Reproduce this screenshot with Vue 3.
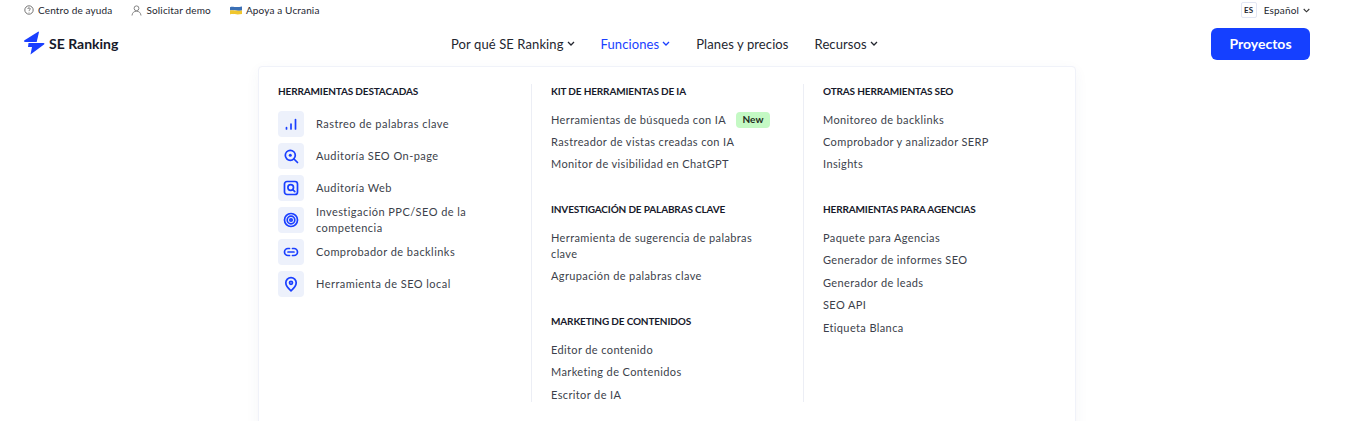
<script setup>
const featured = [
  { name: 'Rastreo de palabras clave', icon: 'bars' },
  { name: 'Auditoría SEO On-page', icon: 'search' },
  { name: 'Auditoría Web', icon: 'web' },
  { name: 'Investigación PPC/SEO de la competencia', icon: 'target' },
  { name: 'Comprobador de backlinks', icon: 'link' },
  { name: 'Herramienta de SEO local', icon: 'pin' },
]

const middle = [
  { title: 'Kit de herramientas de IA', items: ['Herramientas de búsqueda con IA', 'Rastreador de vistas creadas con IA', 'Monitor de visibilidad en ChatGPT'] },
  { title: 'Investigación de palabras clave', items: ['Herramienta de sugerencia de palabras clave', 'Agrupación de palabras clave'] },
  { title: 'Marketing de contenidos', items: ['Editor de contenido', 'Marketing de Contenidos', 'Escritor de IA'] },
]

const right = [
  { title: 'Otras herramientas SEO', items: ['Monitoreo de backlinks', 'Comprobador y analizador SERP', 'Insights'] },
  { title: 'Herramientas para agencias', items: ['Paquete para Agencias', 'Generador de informes SEO', 'Generador de leads', 'SEO API', 'Etiqueta Blanca'] },
]
</script>

<template>
  <div class="page">
    <div class="topbar">
      <a class="top-link">
        <svg width="10" height="10" viewBox="0 0 11 11" fill="none" stroke="#555" stroke-width="0.9">
          <circle cx="5.500" cy="5.500" r="4.600" />
          <path d="M4.200 4.400a1.300 1.300 0 1 1 1.800 1.200c-.4.2-.5.4-.5.8M5.500 7.600v.6" />
        </svg>
        Centro de ayuda
      </a>
      <a class="top-link">
        <svg width="11" height="11" viewBox="0 0 11 11" fill="none" stroke="#777" stroke-width="0.9">
          <circle cx="5.500" cy="3.300" r="2.400" />
          <path d="M1 10.500c.3-2.800 2-4.300 4.500-4.300s4.200 1.500 4.500 4.300" />
        </svg>
        Solicitar demo
      </a>
      <a class="top-link">
        <svg width="12" height="9" viewBox="0 0 12 9">
          <path d="M0 1.200c3-1.200 5 .8 12-.6V4.400c-6 1-9-.6-12 .2z" fill="#3b6fb5" />
          <path d="M0 4.600c3-.8 6 .8 12-.2V8c-6 1.200-9-.6-12 .4z" fill="#f0c62d" />
        </svg>
        Apoya a Ucrania
      </a>
      <div class="lang">
        <span class="lang-code">ES</span>
        <span>Español</span>
        <svg class="chev" width="7" height="5" viewBox="0 0 7 5" fill="none" stroke="#333" stroke-width="1.100">
          <path d="M.7 1l2.800 2.800L6.300 1" />
        </svg>
      </div>
    </div>

    <header class="header">
      <div class="logo">
        <svg width="22" height="24" viewBox="0 0 22 24">
          <path d="M15.500.5 16 1 13.700 11H2.500C1 11 .3 10.200 1.500 9.300z" fill="#1a3fff" />
          <path d="M5.500 12H20.500c1 0 1.300.8.500 1.500L7.500 23.500 9 16H5z" fill="#1a3fff" />
        </svg>
        <span>SE Ranking</span>
      </div>
      <nav class="nav">
        <a class="nav-link">Por qué SE Ranking
          <svg width="8" height="6" viewBox="0 0 8 6" fill="none" stroke="currentColor" stroke-width="1.300"><path d="M1 1l3 3 3-3" /></svg>
        </a>
        <a class="nav-link active">Funciones
          <svg width="8" height="6" viewBox="0 0 8 6" fill="none" stroke="currentColor" stroke-width="1.300"><path d="M1 1l3 3 3-3" /></svg>
        </a>
        <a class="nav-link">Planes y precios</a>
        <a class="nav-link">Recursos
          <svg width="8" height="6" viewBox="0 0 8 6" fill="none" stroke="currentColor" stroke-width="1.300"><path d="M1 1l3 3 3-3" /></svg>
        </a>
      </nav>
      <button class="cta">Proyectos</button>
    </header>

    <div class="panel">
      <section class="col first">
        <h4>Herramientas destacadas</h4>
        <ul class="featured">
          <li v-for="f in featured" :key="f.name">
            <span class="ico">
              <svg width="16" height="16" viewBox="0 0 16 16" fill="none" stroke="#1a3fff" stroke-width="1.700" stroke-linecap="round" stroke-linejoin="round">
                <template v-if="f.icon === 'bars'">
                  <path d="M3.500 13v-1.500M8 13V8M12.500 13V3.500" />
                </template>
                <template v-else-if="f.icon === 'search'">
                  <circle cx="7.300" cy="7.300" r="5" />
                  <circle cx="7.300" cy="7.300" r="1.500" fill="#1a3fff" stroke="none" />
                  <path d="M11 11l3.500 3.500" />
                </template>
                <template v-else-if="f.icon === 'web'">
                  <rect x="1.500" y="1.500" width="13" height="13" rx="2.500" />
                  <circle cx="7.700" cy="7.500" r="2.800" />
                  <path d="M9.800 9.600l2 2" />
                </template>
                <template v-else-if="f.icon === 'target'">
                  <circle cx="8" cy="8" r="6.500" />
                  <circle cx="8" cy="8" r="3.800" />
                  <circle cx="8" cy="8" r="1.200" />
                </template>
                <template v-else-if="f.icon === 'link'">
                  <path d="M6.500 4.500H5a3.500 3.500 0 0 0 0 7h1.500M9.500 4.500H11a3.500 3.500 0 0 1 0 7H9.500M5 8h6" />
                </template>
                <template v-else>
                  <path d="M8 14.800C5 12.300 2.800 9.800 2.800 6.800a5.200 5.200 0 0 1 10.400 0c0 3-2.200 5.500-5.200 8z" />
                  <circle cx="8" cy="6.800" r="1.500" />
                </template>
              </svg>
            </span>
            <span class="featured-name">{{ f.name }}</span>
          </li>
        </ul>
      </section>

      <section class="col middle">
        <div v-for="g in middle" :key="g.title" class="group">
          <h4>{{ g.title }}</h4>
          <ul class="links">
            <li v-for="item in g.items" :key="item">
              <span>{{ item }}</span>
              <span v-if="item === 'Herramientas de búsqueda con IA'" class="badge">New</span>
            </li>
          </ul>
        </div>
      </section>

      <section class="col last">
        <div v-for="g in right" :key="g.title" class="group">
          <h4>{{ g.title }}</h4>
          <ul class="links">
            <li v-for="item in g.items" :key="item">{{ item }}</li>
          </ul>
        </div>
      </section>
    </div>
  </div>
</template>

<style scoped>
.page {
  height: 421px;
  overflow: hidden;
  background: #fff;
  font-family: Lato, "Open Sans", sans-serif;
  color: #2a2d3a;
}

.topbar {
  height: 20px;
  padding: 0 43px 0 24px;
  display: flex;
  align-items: center;
  gap: 19px;
  font-size: 10px;
  letter-spacing: 0.15px;
  color: #23262f;
}

.top-link {
  display: flex;
  align-items: center;
  gap: 4px;
}

.lang {
  margin-left: auto;
  display: flex;
  align-items: center;
  gap: 7px;
}

.lang-code {
  width: 16px;
  height: 16px;
  box-sizing: border-box;
  border: 1px solid #e2e6f3;
  border-radius: 2px;
  display: flex;
  align-items: center;
  justify-content: center;
  font-size: 8px;
  font-weight: 700;
}

.chev {
  margin-left: -3px;
}

.header {
  height: 46px;
  padding: 0 43px 0 23px;
  display: flex;
  align-items: flex-start;
}

.logo {
  width: 428px;
  display: flex;
  align-items: center;
  gap: 4px;
  padding-top: 11px;
  font-size: 14px;
  font-weight: 700;
  color: #16192a;
}

.nav {
  display: flex;
  align-items: center;
  gap: 26px;
  height: 47px;
  font-size: 13px;
  letter-spacing: 0.1px;
}

.nav-link {
  display: flex;
  align-items: center;
  gap: 3px;
  color: #23262f;
}

.nav-link.active {
  color: #1a3fff;
}

.cta {
  margin: 8px 0 0 auto;
  width: 99px;
  height: 32px;
  padding: 0 0 2px;
  border: none;
  border-radius: 6px;
  background: #1540ff;
  color: #fff;
  font-family: inherit;
  font-size: 14px;
  font-weight: 700;
}

.panel {
  margin-left: 258px;
  width: 818px;
  box-sizing: border-box;
  padding: 17px 20px 60px 19px;
  background: #fff;
  border: 1px solid #f0f2f9;
  border-radius: 4px;
  box-shadow: 0 4px 14px rgba(60, 70, 120, 0.05);
  display: grid;
  grid-template-columns: 253px 272px 1fr;
}

.col {
  height: 318px;
}

.middle,
.last {
  padding-left: 19px;
  border-left: 1px solid #eceef5;
}

h4 {
  margin: 0 0 13.600px;
  font-size: 10px;
  line-height: 14px;
  font-weight: 700;
  letter-spacing: -0.15px;
  text-transform: uppercase;
  color: #16192a;
}

.first h4 {
  margin-bottom: 13px;
}

ul {
  margin: 0;
  padding: 0;
  list-style: none;
}

.featured {
  display: flex;
  flex-direction: column;
  gap: 6px;
}

.featured li {
  height: 26px;
  display: flex;
  align-items: center;
  gap: 12px;
  font-size: 11px;
  line-height: 16px;
  letter-spacing: 0.45px;
  color: #3c3f4b;
}

.featured-name {
  width: 175px;
}

.ico {
  flex: none;
  width: 26px;
  height: 26px;
  border-radius: 4px;
  background: #edf1fb;
  display: flex;
  align-items: center;
  justify-content: center;
}

.group {
  margin-bottom: 30px;
}

.links {
  display: flex;
  flex-direction: column;
  gap: 6.400px;
  font-size: 11px;
  line-height: 16px;
  letter-spacing: 0.38px;
  color: #3c3f4b;
}

.links li {
  width: 224px;
  display: flex;
  align-items: center;
}

.badge {
  flex: none;
  margin-left: 10px;
  width: 34px;
  height: 16px;
  line-height: 15px;
  text-align: center;
  border-radius: 4px;
  background: #c4f9c4;
  color: #1d2a20;
  font-size: 10px;
  font-weight: 700;
  letter-spacing: 0.1px;
}
</style>

<style>
html,
body {
  margin: 0;
  overflow: hidden;
}
</style>
